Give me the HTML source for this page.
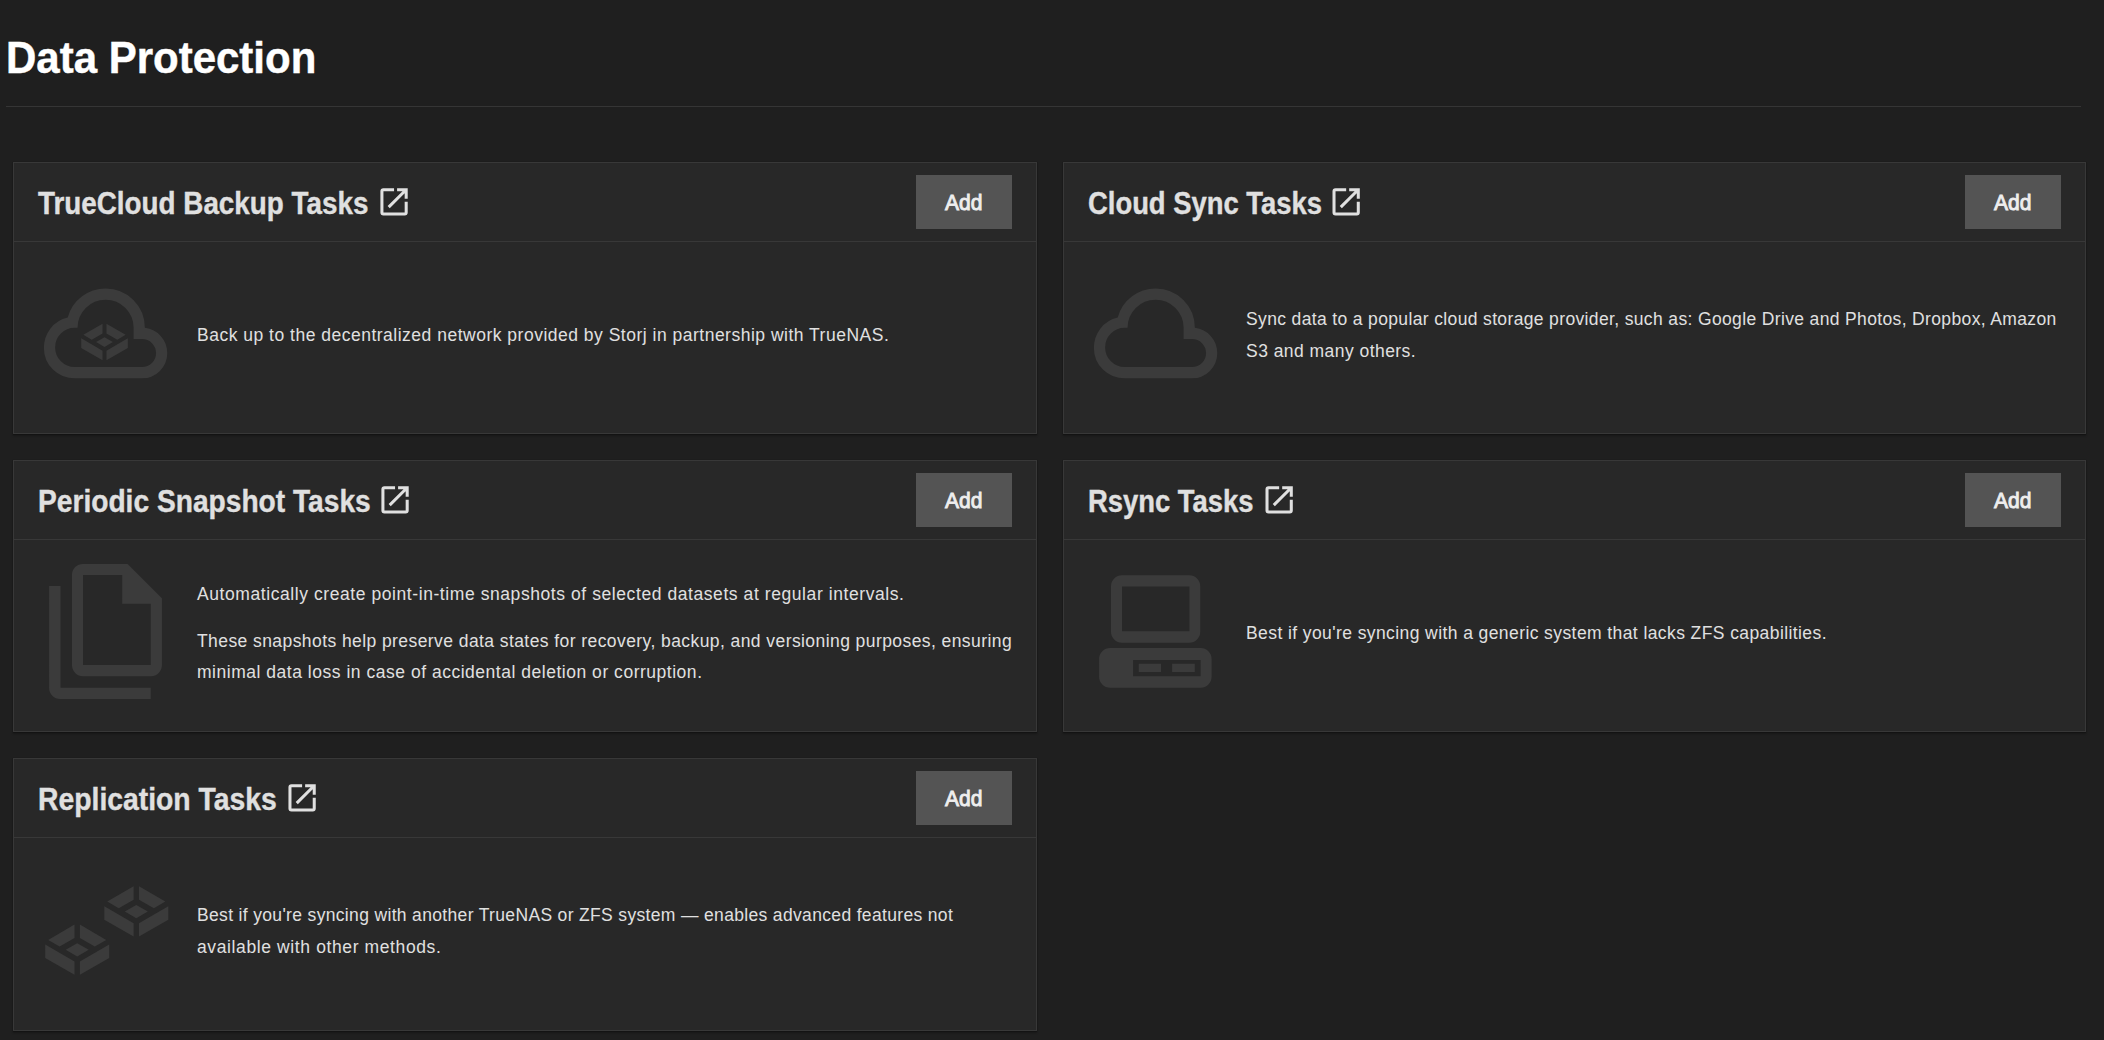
<!DOCTYPE html>
<html><head><meta charset="utf-8">
<style>
html,body{margin:0;padding:0;}
body{width:2104px;height:1040px;overflow:hidden;background:#1f1f1f;position:relative;font-family:"Liberation Sans",sans-serif;}
.t{position:absolute;white-space:pre;line-height:1;transform-origin:0 0;}
.h1{font-weight:bold;font-size:44.6px;color:#ffffff;-webkit-text-stroke:0.45px #ffffff;}
.dv{position:absolute;left:6px;top:106px;width:2075px;height:1px;background:#353535;}
.card{position:absolute;box-sizing:border-box;height:272px;background:#282828;border:1px solid #383838;box-shadow:0 2px 2px 0 rgba(0,0,0,.22),0 1px 1px 0 rgba(0,0,0,.14),0 0 1px 0 rgba(0,0,0,.35);}
.hdr{position:absolute;left:0;right:0;top:0;height:78px;border-bottom:1px solid #383838;}
.ct{font-weight:bold;font-size:31.3px;color:#e0e0e0;-webkit-text-stroke:0.35px #e0e0e0;}
.btn{position:absolute;width:96px;height:54px;background:#545454;}
.bt{font-weight:normal;font-size:21.6px;color:#eeeeee;-webkit-text-stroke:0.9px #eeeeee;}
.bd{font-size:17.5px;color:#e0e0e0;}
</style></head><body>
<div class="t h1" style="left:6px;top:36px;transform:scaleX(0.9415)">Data Protection</div>
<div class="dv"></div>
<div class="card" style="left:13px;top:162px;width:1024px;height:272px"><div class="hdr"></div></div>
<div class="card" style="left:1063px;top:162px;width:1023px;height:272px"><div class="hdr"></div></div>
<div class="card" style="left:13px;top:460px;width:1024px;height:272px"><div class="hdr"></div></div>
<div class="card" style="left:1063px;top:460px;width:1023px;height:272px"><div class="hdr"></div></div>
<div class="card" style="left:13px;top:758px;width:1024px;height:273px"><div class="hdr"></div></div>
<div class="btn" style="left:916px;top:175px"></div>
<div class="t bt" style="left:945px;top:192px;transform:scaleX(0.975)">Add</div>
<div class="btn" style="left:1965px;top:175px"></div>
<div class="t bt" style="left:1994px;top:192px;transform:scaleX(0.975)">Add</div>
<div class="btn" style="left:916px;top:473px"></div>
<div class="t bt" style="left:945px;top:490px;transform:scaleX(0.975)">Add</div>
<div class="btn" style="left:1965px;top:473px"></div>
<div class="t bt" style="left:1994px;top:490px;transform:scaleX(0.975)">Add</div>
<div class="btn" style="left:916px;top:771px"></div>
<div class="t bt" style="left:945px;top:788px;transform:scaleX(0.975)">Add</div>
<div class="t ct" style="left:38px;top:188px;transform:scaleX(0.889)">TrueCloud Backup Tasks</div>
<div class="t ct" style="left:1088px;top:188px;transform:scaleX(0.8755)">Cloud Sync Tasks</div>
<div class="t ct" style="left:37.5px;top:486px;transform:scaleX(0.8996)">Periodic Snapshot Tasks</div>
<div class="t ct" style="left:1087.5px;top:486px;transform:scaleX(0.8755)">Rsync Tasks</div>
<div class="t ct" style="left:38px;top:784px;transform:scaleX(0.905)">Replication Tasks</div>
<div class="t bd" style="left:197px;top:327px;letter-spacing:0.5px">Back up to the decentralized network provided by Storj in partnership with TrueNAS.</div>
<div class="t bd" style="left:1246px;top:311px;letter-spacing:0.357px">Sync data to a popular cloud storage provider, such as: Google Drive and Photos, Dropbox, Amazon</div>
<div class="t bd" style="left:1246px;top:343px;letter-spacing:0.456px">S3 and many others.</div>
<div class="t bd" style="left:197px;top:586px;letter-spacing:0.574px">Automatically create point-in-time snapshots of selected datasets at regular intervals.</div>
<div class="t bd" style="left:197px;top:633px;letter-spacing:0.423px">These snapshots help preserve data states for recovery, backup, and versioning purposes, ensuring</div>
<div class="t bd" style="left:197px;top:664px;letter-spacing:0.52px">minimal data loss in case of accidental deletion or corruption.</div>
<div class="t bd" style="left:1246px;top:625px;letter-spacing:0.411px">Best if you're syncing with a generic system that lacks ZFS capabilities.</div>
<div class="t bd" style="left:197px;top:907px;letter-spacing:0.338px">Best if you're syncing with another TrueNAS or ZFS system — enables advanced features not</div>
<div class="t bd" style="left:197px;top:939px;letter-spacing:0.614px">available with other methods.</div>
<svg width="2104" height="1040" viewBox="0 0 2104 1040" style="position:absolute;left:0;top:0">
<g fill="#3b3b3b">
<path transform="translate(38.29,400.76) scale(0.1402)" d="M260-160q-91 0-155.5-63T40-377q0-78 47-139t123-78q25-92 100-149t170-57q117 0 198.5 81.5T760-520q69 8 114.5 59.5T920-340q0 75-52.5 127.5T740-160H260Zm0-80h480q42 0 71-29t29-71q0-42-29-71t-71-29h-60v-80q0-83-58.5-141.5T480-720q-83 0-141.5 58.5T280-520h-20q-58 0-99 41t-41 99q0 58 41 99t99 41Z"/>
<path d="M83.39,334.84 L102.53,323.70 L102.53,333.53 L91.69,339.72ZM125.61,334.84 L106.47,323.70 L106.47,333.53 L117.31,339.72ZM96.13,342.05 L104.50,337.24 L112.87,342.05 L104.50,346.92ZM81.20,338.26 L102.53,350.64 L102.53,360.25 L81.20,348.09ZM127.80,338.26 L106.47,350.64 L106.47,360.25 L127.80,348.09Z"/>
<path transform="translate(1088.29,400.76) scale(0.1402)" d="M260-160q-91 0-155.5-63T40-377q0-78 47-139t123-78q25-92 100-149t170-57q117 0 198.5 81.5T760-520q69 8 114.5 59.5T920-340q0 75-52.5 127.5T740-160H260Zm0-80h480q42 0 71-29t29-71q0-42-29-71t-71-29h-60v-80q0-83-58.5-141.5T480-720q-83 0-141.5 58.5T280-520h-20q-58 0-99 41t-41 99q0 58 41 99t99 41Z"/>
<path fill-rule="evenodd" d="M83,563.9H127.6L161.9,598.2V665.2A11,11 0 0 1 150.9,676.2H83A11,11 0 0 1 72,665.2V574.9A11,11 0 0 1 83,563.9ZM83,574.9V665.1H150.7V603.8H122.2V574.9ZM49.1,586H60.5V687.7H150.7V699H60.1A11,11 0 0 1 49.1,688Z"/>
<path fill-rule="evenodd" d="M1122.0,575.25H1189.25A11,11 0 0 1 1200.25,586.25V631.75A11,11 0 0 1 1189.25,642.75H1122.0A11,11 0 0 1 1111.0,631.75V586.25A11,11 0 0 1 1122.0,575.25ZM1122.0,586.6H1189.4V631.25H1122.0ZM1110.1,648.1H1200.6A11,11 0 0 1 1211.6,659.1V676.75A11,11 0 0 1 1200.6,687.75H1110.1A11,11 0 0 1 1099.1,676.75V659.1A11,11 0 0 1 1110.1,648.1ZM1133.1,660H1200.6V676.25H1133.1ZM1138.75,663.75H1161V672.1H1138.75ZM1172.1,663.75H1194.75V672.1H1172.1Z"/>
<path d="M48.20,939.90 L74.50,924.60 L74.50,938.10 L59.60,946.60ZM106.20,939.90 L79.90,924.60 L79.90,938.10 L94.80,946.60ZM65.70,949.80 L77.20,943.20 L88.70,949.80 L77.20,956.50ZM45.20,944.60 L74.50,961.60 L74.50,974.80 L45.20,958.10ZM109.20,944.60 L79.90,961.60 L79.90,974.80 L109.20,958.10ZM107.30,901.60 L133.60,886.30 L133.60,899.80 L118.70,908.30ZM165.30,901.60 L139.00,886.30 L139.00,899.80 L153.90,908.30ZM124.80,911.50 L136.30,904.90 L147.80,911.50 L136.30,918.20ZM104.30,906.30 L133.60,923.30 L133.60,936.50 L104.30,919.80ZM168.30,906.30 L139.00,923.30 L139.00,936.50 L168.30,919.80Z"/>
</g>
<g fill="#e0e0e0">
<path transform="translate(375.85,183.60) scale(1.517)" d="M19 19H5V5h7V3H5a2 2 0 0 0-2 2v14a2 2 0 0 0 2 2h14a2 2 0 0 0 2-2v-7h-2v7zM14 3v2h3.59l-9.83 9.83 1.41 1.41L19 6.41V10h2V3h-7z"/>
<path transform="translate(1327.95,183.60) scale(1.517)" d="M19 19H5V5h7V3H5a2 2 0 0 0-2 2v14a2 2 0 0 0 2 2h14a2 2 0 0 0 2-2v-7h-2v7zM14 3v2h3.59l-9.83 9.83 1.41 1.41L19 6.41V10h2V3h-7z"/>
<path transform="translate(376.85,481.60) scale(1.517)" d="M19 19H5V5h7V3H5a2 2 0 0 0-2 2v14a2 2 0 0 0 2 2h14a2 2 0 0 0 2-2v-7h-2v7zM14 3v2h3.59l-9.83 9.83 1.41 1.41L19 6.41V10h2V3h-7z"/>
<path transform="translate(1260.95,481.60) scale(1.517)" d="M19 19H5V5h7V3H5a2 2 0 0 0-2 2v14a2 2 0 0 0 2 2h14a2 2 0 0 0 2-2v-7h-2v7zM14 3v2h3.59l-9.83 9.83 1.41 1.41L19 6.41V10h2V3h-7z"/>
<path transform="translate(283.90,779.60) scale(1.517)" d="M19 19H5V5h7V3H5a2 2 0 0 0-2 2v14a2 2 0 0 0 2 2h14a2 2 0 0 0 2-2v-7h-2v7zM14 3v2h3.59l-9.83 9.83 1.41 1.41L19 6.41V10h2V3h-7z"/>
</g>
</svg>
</body></html>
